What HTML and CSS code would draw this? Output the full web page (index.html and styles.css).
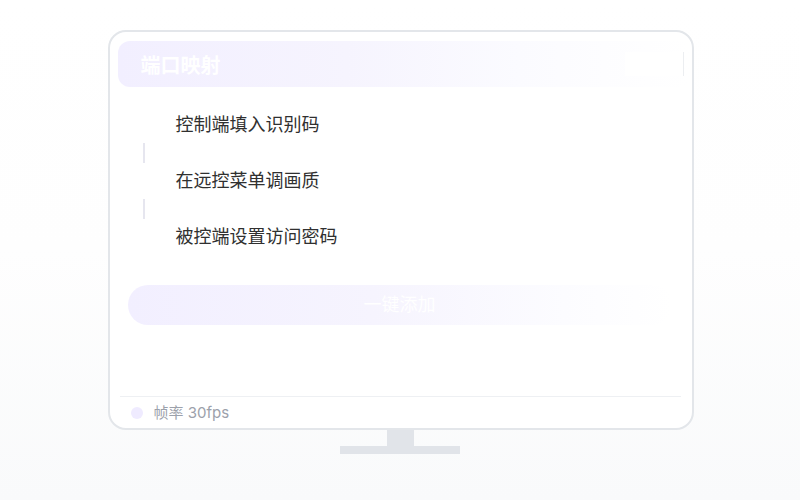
FILE: index.html
```html
<!DOCTYPE html>
<html lang="zh">
<head>
<meta charset="utf-8">
<title>端口映射</title>
<link rel="stylesheet" href="styles.css">
</head>
<body>
<div class="stage">
  <div class="monitor">
    <div class="header">
      <span class="header-title">端口映射</span>
      <span class="header-badge"></span>
    </div>
    <div class="steps">
      <div class="step"><span class="marker"></span><span class="step-text">控制端填入识别码</span></div>
      <div class="connector"></div>
      <div class="step"><span class="marker"></span><span class="step-text">在远控菜单调画质</span></div>
      <div class="connector"></div>
      <div class="step"><span class="marker"></span><span class="step-text">被控端设置访问密码</span></div>
    </div>
    <div class="action">一键添加</div>
    <div class="footer">
      <span class="dot"></span>
      <span class="footer-text">帧率 30fps</span>
    </div>
  </div>
  <div class="neck"></div>
  <div class="base"></div>
</div>
</body>
</html>
```
FILE: styles.css
```css
html, body {
  margin: 0;
  padding: 0;
}
body {
  width: 800px;
  height: 500px;
  overflow: hidden;
  background: linear-gradient(180deg, #ffffff 0%, #fefefe 50%, #f9fafb 100%);
  font-family: Inter, "Noto Sans CJK SC", "Noto Sans", sans-serif;
}
.stage {
  display: flex;
  flex-direction: column;
  align-items: center;
  padding-top: 30px;
}
.monitor {
  width: 586px;
  height: 400px;
  box-sizing: border-box;
  border: 2px solid #e3e6ea;
  border-radius: 18px;
  background: #ffffff;
  padding: 9px 2px 0 8px;
  display: flex;
  flex-direction: column;
  margin-left: 1px;
}
.header {
  height: 46px;
  width: 572px;
  border-radius: 12px;
  background: linear-gradient(90deg, #f2efff 0%, #f6f4fe 40%, #fbfbff 70%, rgba(255,255,255,0) 100%);
  display: flex;
  align-items: center;
  justify-content: space-between;
  padding: 0 6px 0 23px;
  box-sizing: border-box;
}
.header-title {
  color: #ffffff;
  font-size: 20px;
  font-weight: 700;
  line-height: 26px;
  padding-top: 3px;
}
.header-badge {
  width: 58px;
  height: 24px;
  background: #ffffff;
  border-right: 1px solid #eceef1;
}
.steps {
  margin-top: 20px;
  margin-left: 10px;
  display: flex;
  flex-direction: column;
}
.step {
  height: 36px;
  display: flex;
  align-items: center;
}
.marker {
  width: 32px;
  height: 32px;
  border-radius: 50%;
  background: #ffffff;
  margin-right: 16px;
}
.step-text {
  font-size: 18px;
  line-height: 26px;
  color: #303030;
}
.connector {
  width: 2px;
  height: 20px;
  margin-left: 15px;
  background: #e6e6ef;
}
.action {
  margin-top: 30px;
  margin-left: 10px;
  width: 544px;
  height: 40px;
  border-radius: 20px;
  background: linear-gradient(90deg, #f2efff 0%, #f6f4fe 45%, #fcfcff 80%, rgba(255,255,255,0) 100%);
  color: #ffffff;
  font-size: 18px;
  line-height: 40px;
  text-align: center;
}
.footer {
  margin-top: auto;
  width: 561px;
  margin-left: 2px;
  height: 32px;
  border-top: 1px solid #eef0f3;
  box-sizing: border-box;
  display: flex;
  align-items: center;
  padding-left: 11px;
}
.dot {
  width: 12px;
  height: 12px;
  border-radius: 50%;
  background: #efebff;
  margin-right: 11px;
}
.footer-text {
  font-size: 15px;
  color: #9ca1ab;
  line-height: 20px;
  padding-top: 1px;
}
.neck {
  width: 27px;
  height: 16px;
  background: #e1e4e9;
  margin-left: 1px;
}
.base {
  width: 120px;
  height: 8px;
  background: #e1e4e9;
}
```
